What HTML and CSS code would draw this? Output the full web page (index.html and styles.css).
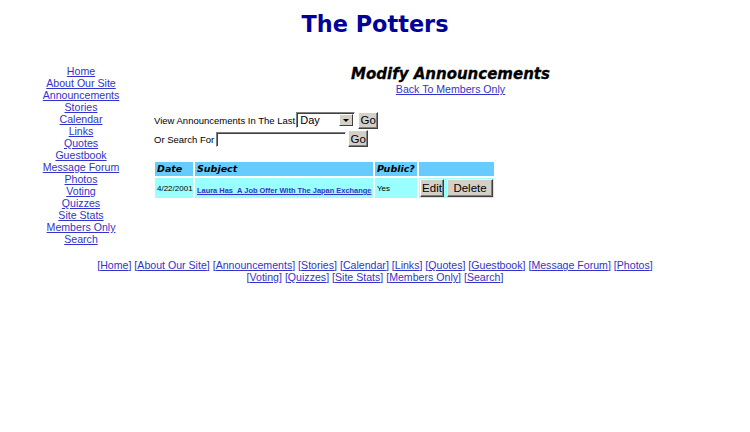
FILE: index.html
```html
<!DOCTYPE html>
<html>
<head>
<meta charset="utf-8">
<title>The Potters</title>
<link rel="stylesheet" href="styles.css">
</head>
<body>
<h1 class="site-title">The Potters</h1>
<div class="layout">
  <nav class="side-nav">
    <a href="#">Home</a>
    <a href="#">About Our Site</a>
    <a href="#">Announcements</a>
    <a href="#">Stories</a>
    <a href="#">Calendar</a>
    <a href="#">Links</a>
    <a href="#">Quotes</a>
    <a href="#">Guestbook</a>
    <a href="#">Message Forum</a>
    <a href="#">Photos</a>
    <a href="#">Voting</a>
    <a href="#">Quizzes</a>
    <a href="#">Site Stats</a>
    <a href="#">Members Only</a>
    <a href="#">Search</a>
  </nav>
  <main class="main">
    <div class="page-head">
      <h2 class="page-title">Modify Announcements</h2>
      <a class="back-link" href="#">Back To Members Only</a>
    </div>
    <form class="filter">
      <div class="filter-row">
        <span class="label">View Announcements In The Last</span>
        <span class="select-box">
          <select class="select"><option>Day</option><option>Week</option><option>Month</option></select>
          <span class="select-arrow"><span class="tri"></span></span>
        </span>
        <button type="button" class="btn btn-go">Go</button>
      </div>
      <div class="filter-row row2">
        <span class="label">Or Search For</span>
        <input class="text-input" type="text">
        <button type="button" class="btn btn-go2">Go</button>
      </div>
    </form>
    <table class="ann-table">
      <tr class="head-row">
        <th class="c-date">Date</th>
        <th class="c-subj">Subject</th>
        <th class="c-pub">Public?</th>
        <th class="c-act"></th>
      </tr>
      <tr class="data-row">
        <td class="c-date small">4/22/2001</td>
        <td class="c-subj"><a class="subj-link" href="#">Laura Has &nbsp;A Job Offer With The Japan Exchange</a></td>
        <td class="c-pub small">Yes</td>
        <td class="c-act"><button type="button" class="btn btn-edit">Edit</button><button type="button" class="btn btn-del">Delete</button></td>
      </tr>
    </table>
  </main>
</div>
<footer class="footer">
  <div>[<a href="#">Home</a>] [<a href="#">About Our Site</a>] [<a href="#">Announcements</a>] [<a href="#">Stories</a>] [<a href="#">Calendar</a>] [<a href="#">Links</a>] [<a href="#">Quotes</a>] [<a href="#">Guestbook</a>] [<a href="#">Message Forum</a>] [<a href="#">Photos</a>]</div>
  <div>[<a href="#">Voting</a>] [<a href="#">Quizzes</a>] [<a href="#">Site Stats</a>] [<a href="#">Members Only</a>] [<a href="#">Search</a>]</div>
</footer>
</body>
</html>
```
FILE: styles.css
```css
html, body {
  background: #ffffff;
}
body {
  margin: 8px;
  font-family: "Liberation Sans", Arial, sans-serif;
  color: #000;
}
a {
  color: #3333cc;
  text-decoration: underline;
}
.site-title {
  margin: 3px 0 0;
  text-align: center;
  font-family: "DejaVu Sans", Verdana, sans-serif;
  font-weight: bold;
  font-size: 22.4px;
  line-height: 26px;
  color: #000099;
}
.layout {
  display: flex;
  margin-top: 28px;
}
.side-nav {
  width: 146px;
  flex: none;
  display: flex;
  flex-direction: column;
  align-items: center;
  font-size: 10.6px;
  line-height: 12px;
}
.main {
  flex: 1;
}
.page-head {
  display: flex;
  flex-direction: column;
  align-items: center;
  padding-left: 5px;
  margin-top: 1px;
}
.page-title {
  margin: 0;
  font-family: "DejaVu Sans", Verdana, sans-serif;
  font-weight: bold;
  font-style: italic;
  font-size: 15px;
  line-height: 17px;
  -webkit-text-stroke: 0.3px #000;
}
.back-link {
  font-size: 10.6px;
  line-height: 12px;
}
.filter {
  margin: 16px 0 0;
}
.filter-row {
  display: flex;
  align-items: center;
  height: 18px;
}
.row2 {
  height: 19px;
}
.label {
  font-size: 9.5px;
  line-height: 12px;
  padding-top: 2px;
}
.select-box {
  display: inline-flex;
  width: 59px;
  height: 16px;
  box-sizing: border-box;
  margin-left: 1px;
  border: 1px solid;
  border-color: #808080 #ffffff #ffffff #808080;
  box-shadow: inset 1px 1px 0 #404040;
  background: #fff;
}
.select {
  flex: 1;
  min-width: 0;
  appearance: none;
  -webkit-appearance: none;
  border: 0;
  outline: 0;
  background: transparent;
  font-family: "Liberation Sans", Arial, sans-serif;
  font-size: 11px;
  padding: 0 0 0 2px;
  margin: 1px 0 0 1px;
  height: 13px;
  line-height: 13px;
  color: #000;
}
.select-arrow {
  width: 14px;
  height: 12px;
  margin: 1px 1px 1px 0;
  box-sizing: border-box;
  background: #d4d0c8;
  border: 1px solid;
  border-color: #ffffff #404040 #404040 #ffffff;
  display: flex;
  align-items: center;
  justify-content: center;
}
.tri {
  width: 0;
  height: 0;
  border-left: 3px solid transparent;
  border-right: 3px solid transparent;
  border-top: 3px solid #000;
}
.btn {
  background: #d4d0c8;
  border: 1px solid;
  border-color: #ffffff #404040 #404040 #ffffff;
  box-shadow: inset -1px -1px 0 #808080;
  font-family: "Liberation Sans", Arial, sans-serif;
  font-size: 11.5px;
  color: #000;
  padding: 0;
  box-sizing: border-box;
  line-height: 14px;
}
.btn-go {
  width: 20px;
  height: 17px;
  margin-left: 3px;
}
.btn-go2 {
  width: 20px;
  height: 17px;
  margin-left: 2px;
}
.text-input {
  width: 130px;
  height: 15px;
  box-sizing: border-box;
  margin: 2px 0 0 2px;
  padding: 0;
  border: 1px solid;
  border-color: #808080 #ffffff #ffffff #808080;
  box-shadow: inset 1px 1px 0 #404040;
  background: #fff;
}
.ann-table {
  border-collapse: separate;
  border-spacing: 2px;
  table-layout: fixed;
  width: 343px;
  margin: 12px 0 0 -1px;
}
.ann-table th,
.ann-table td {
  box-sizing: border-box;
  padding: 0 2px;
  text-align: left;
  white-space: nowrap;
  overflow: hidden;
}
.head-row th {
  background: #66ccff;
  height: 14px;
  font-family: "DejaVu Sans", Verdana, sans-serif;
  font-weight: bold;
  font-style: italic;
  font-size: 9.5px;
  line-height: 14px;
}
.data-row td {
  background: #99ffff;
  height: 20px;
}
.c-date { width: 38px; }
.c-subj { width: 178px; }
.c-pub { width: 42px; }
.c-act { width: 75px; }
.data-row .c-act {
  padding: 1px 0 1px 1px;
}
.small {
  font-size: 8px;
}
.subj-link {
  font-size: 7.45px;
  font-weight: bold;
}
.btn-edit {
  width: 24px;
  height: 18px;
  vertical-align: top;
}
.btn-del {
  width: 46px;
  height: 18px;
  margin-left: 3px;
  vertical-align: top;
}
.footer {
  margin-top: 14px;
  text-align: center;
  font-size: 10.6px;
  line-height: 12px;
  color: #3333cc;
}
```
